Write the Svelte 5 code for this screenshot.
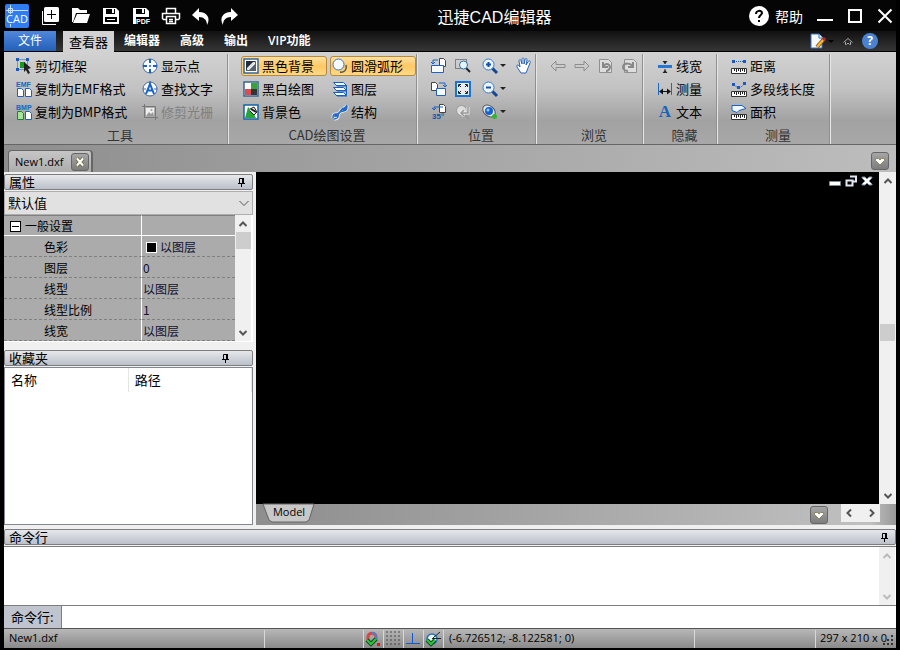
<script lang="ts">
  let activeTab = "查看器";
  let command = "";
  let preset = "默认值";

  const tabs = ["查看器", "编辑器", "高级", "输出", "VIP功能"];

  const page = (x: number, y: number, fill = "#fff", stroke = "#1c5fc4") =>
    `<path d="M${x} ${y}h4l2 2v6h-6z" fill="${fill}" stroke="${stroke}"/>`;
  const ruler = `<path d="M.5 10.5h15v5H.5z" fill="#fff" stroke="#333"/><path d="M3.500 11v2M5.500 11v3M7.500 11v2M9.500 11v3M11.500 11v2M13.500 11v3" stroke="#222"/>`;
  const lens = `<path d="M10 10l5 5" stroke="#17468f" stroke-width="3"/><circle cx="6.500" cy="6.500" r="5.500" fill="#eaf5ff" stroke="#3679cf"/>`;

  // inner markup of the 16x16 icons
  const icons: Record<string, string> = {
    cut: `<path d="M1.500 1.500h10v10h-10z" fill="none" stroke="#1c5fc4" stroke-dasharray="1 1"/><path d="M0 0h3v3H0zM10 0h3v3h-3zM0 10h3v3H0z" fill="#1659c7"/><path d="M4 4h5v6H4z" fill="#179a20"/><path d="M8 4l7 6-3 1 2 4-2 1-2-4-2 2z" fill="#222"/>`,
    emf: `<text x="0" y="6" font-family="Liberation Sans" font-size="7" font-weight="700" fill="#1565c8">EMF</text>${page(1.5, 7.5)}${page(9.5, 7.5)}`,
    bmp: `<text x="0" y="6" font-family="Liberation Sans" font-size="7" font-weight="700" fill="#1565c8">BMP</text>${page(1.5, 7.5, "#a5e59a", "#16842a")}${page(9.5, 7.5)}`,
    target: `<circle cx="8" cy="8" r="7" fill="#f8fbff" stroke="#44689f"/><path d="M8 1v4M8 11v4M1 8h4M11 8h4" stroke="#1761c9" stroke-width="2"/><path d="M7 8h2M8 7v2" stroke="#1761c9"/>`,
    find: `<circle cx="8" cy="8" r="7" fill="#f8fbff" stroke="#44689f"/><path d="M1 8h3M12 8h3M8 0v3" stroke="#44689f"/><path d="M4 13L8 3l4 10M5.500 9.500h5" stroke="#1761c9" stroke-width="2" fill="none"/>`,
    crop: `<path d="M2.500 0v13.500H16M0 2.500h13.500V16" stroke="#777" fill="none"/><path d="M4 4h8v8H4z" fill="#eee"/><path d="M4 12l3-4 2 2 2-2 1 4z" fill="#999"/><circle cx="9.500" cy="6" r="1" fill="#999"/>`,
    dark: `<path d="M1 1h14v14H1z" fill="#fff" stroke="#376694" stroke-width="1.500"/><path d="M3 3h10L3 13z" fill="#262d3a"/><path d="M13 3v10H3z" fill="#56606e"/><path d="M12 4v2l-6 6H4z" fill="#fff"/><path d="M12 4L4 12V10l6-6z" fill="#e4edf6"/>`,
    mono: `<path d="M1 1h14v14H1z" fill="#fff" stroke="#376694" stroke-width="1.500"/><path d="M8 2h6v6H8z" fill="#38a33d"/><path d="M2 8h6v6H2z" fill="#e14b4b"/><path d="M8 8h6v6H8z" fill="#333"/><path d="M2 2h6v6H2z" fill="#fff"/>`,
    bgcolor: `<path d="M1 1h14v14H1z" fill="#fff" stroke="#1463a8" stroke-width="1.500"/><path d="M2 14L5 3l4 4 4 7z" fill="#27a638"/><path d="M7 5l4-2 3 5-3 3-4-4" fill="#eef" stroke="#222"/><path d="M8 5l5 3" stroke="#222" stroke-width="2"/>`,
    smooth: `<circle cx="6.500" cy="6.500" r="5.500" fill="#f5fbff" stroke="#3077d1"/><path d="M8 14c5 1 7-3 6-7" fill="none" stroke="#555" stroke-width="1.500"/>`,
    layers: `<path d="M1.500 1.500h10l3 3h-10zM1.500 6.500h10l3 3h-10zM1.500 11.500h10l3 3h-10z" fill="#f4faff" stroke="#1760c3"/><path d="M2 2l3 3h10M2 7l3 3h10M2 12l3 3h10M14.500 4v10" fill="none" stroke="#1760c3"/>`,
    structure: `<path d="M1 14c0-8 5-1 7-6s5-2 7-7M2 15c7 0 2-5 6-7s7 0 7-6" fill="none" stroke="#eef5ff" stroke-width="3"/><path d="M1 14c0-8 5-1 7-6s5-2 7-7M2 15c7 0 2-5 6-7s7 0 7-6M3 10l3 3M10 4l3 3M2 12h4M10 5h4" fill="none" stroke="#2367c4" stroke-width="1.500"/>`,
    pageLeft: `${page(8.5, 0.5, "#fff", "#444")}<path d="M.5 7.500h12v7H.5z" fill="#f5faff" stroke="#1c62c8"/><path d="M7 2H2v4M0 4l2 2 2-2" fill="none" stroke="#1c62c8"/>`,
    pageRight: `${page(0.5, 1.5, "#fff", "#444")}<path d="M5.500 7.500h9v7h-9z" fill="#f5faff" stroke="#1c62c8"/><path d="M8 2h6v3M12 4l2 2 2-2" fill="none" stroke="#1c62c8"/>`,
    angle: `${page(8.5, 0.5, "#fff", "#444")}<path d="M12 3H3v3M1 4l2 2 2-2" fill="none" stroke="#1c62c8"/><text x="1" y="15" font-family="Liberation Sans" font-size="8" font-weight="700" fill="#1552aa">35°</text>`,
    zoomWindow: `<path d="M.5 1.500h11v9H.5z" fill="none" stroke="#333" stroke-dasharray="1 1"/><path d="M11 10l4 4" stroke="#222" stroke-width="2"/><circle cx="8.500" cy="7" r="4" fill="#e9f6ff" stroke="#2b6fbb"/>`,
    extents: `<path d="M1 1h14v14H1z" fill="#e9edf1" stroke="#1474df" stroke-width="2"/><path d="M3.500 6V3.500H6M10 3.500h2.500V6M12.500 10v2.500H10M6 12.500H3.500V10M4 4l2 2M12 4l-2 2M12 12l-2-2M4 12l2-2" stroke="#222" fill="none"/>`,
    zoomPrevious: `<path d="M9 10l5 5" stroke="#999" stroke-width="2"/><circle cx="6.500" cy="6.500" r="5" fill="#ddd" stroke="#999"/><path d="M13 3v6H7M9 6L6 9l3 3" fill="none" stroke="#eee" stroke-width="3"/><path d="M13 3v6H7M9 6L6 9l3 3" fill="none" stroke="#999" stroke-width="1.500"/>`,
    zoomIn: `${lens}<path d="M4 6.500h5M6.500 4v5" stroke="#1552aa" stroke-width="2"/>`,
    zoomOut: `${lens}<path d="M4 6.500h5" stroke="#1552aa" stroke-width="2"/>`,
    orbit: `<ellipse cx="7" cy="7" rx="7" ry="5" transform="rotate(40 7 7)" fill="#dce7ec" stroke="#555"/><circle cx="7" cy="7" r="4" fill="#1761cf"/><circle cx="6" cy="6" r="1.500" fill="#91d1ff"/><circle cx="12.500" cy="12.500" r="2.500" fill="#32b431"/>`,
    hand: `<path d="M5 15L1 9c-1-2 1-3 3 0L3 3c0-2 2-2 2 0l1 3V1.500c0-2 2-2 2 0V6l1-4c0-2 2-2 2 0l-1 5 2-3c1-2 3-1 2 1l-2 5-2 5z" fill="#fff" stroke="#2863bd"/>`,
    back: `<path d="M6 3L1 8l5 5v-3.500h9v-3H6z" fill="#ccc" stroke="#8d8d8d"/>`,
    forward: `<path d="M10 3l5 5-5 5V9.500H1v-3h9z" fill="#ccc" stroke="#8d8d8d"/>`,
    rotateLeft: `<path d="M1.500 1.500h9l3 3v10h-12z" fill="#ddd" stroke="#909090"/><path d="M5 4v5h5M5 9c2-4 6-4 7 0 0 2-2 4-4 4" fill="none" stroke="#888" stroke-width="2"/>`,
    rotateRight: `<path d="M2.500 1.500h9l3 3v10h-12z" fill="#ddd" stroke="#909090"/><path d="M11 4v5H6M11 9c-2-4-9-5-10 0 0 2 2 4 5 4" fill="none" stroke="#888" stroke-width="2"/>`,
    lineWidth: `<path d="M1 7h14v3H1z" fill="#2477d5"/><path d="M8 3v3M8 11v4" stroke="#222"/><path d="M5.500 3h5L8 6zM5.500 15h5L8 12z" fill="#222"/>`,
    dimension: `<path d="M1.500 2v12M14.500 2v12" stroke="#1b68cc"/><path d="M3 10.500h10" stroke="#111"/><path d="M2 10.500l4-3v6zM14 10.500l-4-3v6z" fill="#111"/>`,
    distance: `<path d="M3 3.500h10" stroke="#1659c7" stroke-dasharray="1 1"/><path d="M1 2h3v3H1zM12 2h3v3h-3z" fill="#1659c7"/>${ruler}`,
    polyline: `<path d="M2 3.500l6 4 6-5" stroke="#1659c7" stroke-dasharray="1 1" fill="none"/><path d="M1 2h3v3H1zM6 5h3v3H6zM12 1h3v3h-3z" fill="#1659c7"/>${ruler}`,
    area: `<path d="M1 1.500h10l4 3-7 2-2 2-5-2z" fill="#eef7ff" stroke="#1761c9"/>${ruler}`,
    snap: `<path d="M3 11V6c0-5 8-5 8 0v4" fill="none" stroke="#d44" stroke-width="3"/><path d="M7 2c3 0 4 2 4 4v4" fill="none" stroke="#4b82c8" stroke-width="2"/><path d="M2 9l4 4 5-5" fill="none" stroke="#064d11" stroke-width="4"/><path d="M2 9l4 4 5-5" fill="none" stroke="#33c343" stroke-width="2"/><path d="M12 12h3v3h-3z" fill="#e11"/>`,
    dots: `<path d="M1 1h2M5 1h2M9 1h2M13 1h2M1 5h2M5 5h2M9 5h2M13 5h2M1 9h2M5 9h2M9 9h2M13 9h2M1 13h2M5 13h2M9 13h2M13 13h2" stroke="#444"/>`,
    ortho: `<path d="M1 12.500h14M7.500 2v10" stroke="#1659c7"/>`,
    track: `<circle cx="7" cy="8" r="5" fill="#e8f5ff" stroke="#2871bd" stroke-width="1.500"/><path d="M7 7.500h9M8 7l7-6" stroke="#222"/><path d="M2 9l4 4 4-4" fill="none" stroke="#064d11" stroke-width="4"/><path d="M2 9l4 4 4-4" fill="none" stroke="#33c343" stroke-width="2"/>`,
    pin: `<path d="M6.500 4.500h4v5h-4zM5 9.500h7M8.500 10v3" fill="none" stroke="#000"/><path d="M9 4h2v6H9z"/>`,
    up: `<path d="M4.500 10L8 6.500 11.500 10" fill="none" stroke="currentColor" stroke-width="2"/>`,
    down: `<path d="M4.500 6L8 9.500 11.500 6" fill="none" stroke="currentColor" stroke-width="2"/>`,
    drop: `<path d="M3.500 6L8 10.500 12.500 6" fill="none" stroke="currentColor"/>`,
    left: `<path d="M10 4.500L6.500 8l3.500 3.500" fill="none" stroke="currentColor" stroke-width="2"/>`,
    right: `<path d="M6 4.500L9.500 8 6 11.500" fill="none" stroke="currentColor" stroke-width="2"/>`,
    heart: `<path d="M3.500 5.500h3L8 7l1.500-1.500h3v2L8 12 3.500 7.500z" fill="#fff" stroke="#8d8560"/>`,
    close: `<path d="M5 4.500l6 7M11 4.500l-6 7" stroke="#777040" stroke-width="4"/><path d="M5 4.500l6 7M11 4.500l-6 7" stroke="#fff" stroke-width="2"/>`,
    note: `<path d="M1 1h8l3 3v11H1z" fill="#f4f8ff" stroke="#3771c4"/><path d="M9 1v4h4" fill="#fff" stroke="#3771c4"/><path d="M7 14l7-8" stroke="#8c5a18" stroke-width="4"/><path d="M7 14l7-8" stroke="#f6bc3d" stroke-width="2"/><path d="M13 7l2-2" stroke="#b52b39" stroke-width="3"/>`,
    collapse: `<path d="M3.500 9.500L8 5.500l4.500 4M5.500 9v2.500h1L8 10l1.500 1.500h1V9" fill="none" stroke="#aaa"/>`,
  };

  // 18x18 icons of the quick access bar
  const quick = [
    { label: "新建", art: `<path d="M.5 4v13.500H14" fill="none" stroke="#fff"/><rect x="2" y="0" width="15" height="15" rx="1.500" fill="#fff"/><path d="M9.500 3v9M5 7.500h9" stroke="#000"/>` },
    { label: "打开", art: `<path d="M0 1h6l2 2h7v3H4L1 15H0z" fill="#fff"/><path d="M5 7h13l-3 9H1z" fill="#fff"/>` },
    { label: "保存", art: `<path d="M1 1h13l3 3v13H1z" fill="#fff"/><path d="M4 2h9v5H4zM3 10h12v5H3z" fill="#000"/><path d="M10 2h2v4h-2zM5 12h8v1H5z" fill="#fff"/>` },
    { label: "导出PDF", art: `<path d="M1 1h13l3 3v13H1z" fill="#fff"/><path d="M4 2h9v5H4zM4 10h14v8H4z" fill="#000"/><path d="M10 2h2v4h-2z" fill="#fff"/><text x="4" y="17" font-family="Liberation Sans" font-size="7" font-weight="700" fill="#fff">PDF</text>` },
    { label: "打印", art: `<path d="M4.500 6V1.500h9V6M4.500 12.500h-3l-1-1v-5h17v5l-1 1h-3M4.500 9.500h9v7h-9zM7 12.500h4M7 14.500h4" fill="none" stroke="#fff" stroke-width="1.500"/>` },
    { label: "撤销", art: `<path d="M7 1v4c8 0 12 6 8 13 0-5-3-8-8-8v4L0 8z" fill="#fff"/>` },
    { label: "重做", art: `<path d="M9 1v4C1 5-3 11 1 18c0-5 3-8 8-8v4l7-6z" fill="#fff"/>` },
  ];

  const tools = [
    { icon: "cut", label: "剪切框架" },
    { icon: "target", label: "显示点" },
    { icon: "emf", label: "复制为EMF格式" },
    { icon: "find", label: "查找文字" },
    { icon: "bmp", label: "复制为BMP格式" },
    { icon: "crop", label: "修剪光栅", disabled: true },
  ];

  const drawing = [
    { icon: "dark", label: "黑色背景", on: true },
    { icon: "smooth", label: "圆滑弧形", on: true },
    { icon: "mono", label: "黑白绘图" },
    { icon: "layers", label: "图层" },
    { icon: "bgcolor", label: "背景色" },
    { icon: "structure", label: "结构" },
  ];

  const position = [
    { icon: "pageLeft" }, { icon: "zoomWindow" }, { icon: "zoomIn", menu: true }, { icon: "hand" },
    { icon: "pageRight" }, { icon: "extents" }, { icon: "zoomOut", menu: true }, null,
    { icon: "angle" }, { icon: "zoomPrevious" }, { icon: "orbit", menu: true }, null,
  ];

  const browse = ["back", "forward", "rotateLeft", "rotateRight"];

  const hide = [
    { icon: "lineWidth", label: "线宽" },
    { icon: "dimension", label: "测量" },
    { letter: "A", label: "文本" },
  ];

  const measure = [
    { icon: "distance", label: "距离" },
    { icon: "polyline", label: "多段线长度" },
    { icon: "area", label: "面积" },
  ];

  const props = [
    { name: "色彩", value: "以图层", swatch: true },
    { name: "图层", value: "0" },
    { name: "线型", value: "以图层" },
    { name: "线型比例", value: "1" },
    { name: "线宽", value: "以图层" },
  ];
</script>

{#snippet icon(name: string)}
  <svg class="icon" viewBox="0 0 16 16" width="16" height="16" aria-hidden="true">{@html icons[name]}</svg>
{/snippet}

{#snippet command_button(item: any)}
  <button class="cmd" class:on={item.on} disabled={item.disabled}>
    {#if item.letter}<b class="letter">{item.letter}</b>{:else}{@render icon(item.icon)}{/if}{item.label}
  </button>
{/snippet}

<div class="app">
  <header class="titlebar">
    <div class="quick">
      <svg class="logo" viewBox="0 0 24 24" width="24" height="24">
        <rect width="24" height="24" rx="2" fill="#2f7df0" />
        <path d="M5.500 1v22M1 6.500h22M3.500 4.500h4v4h-4z" fill="none" stroke="#c9e0ff" />
        <path d="M1 10h22v10H1z" fill="#2f7df0" />
        <text x="12" y="19" text-anchor="middle" font-family="Open Sans" font-size="11" fill="#fff">CAD</text>
      </svg>
      {#each quick as q}
        <button aria-label={q.label}><svg viewBox="0 0 18 18" width="18" height="18">{@html q.art}</svg></button>
      {/each}
    </div>
    <h1>迅捷CAD编辑器</h1>
    <div class="window">
      <button class="help">
        <svg viewBox="0 0 20 20" width="20" height="20">
          <circle cx="10" cy="10" r="10" fill="#fff" />
          <path d="M7 8c0-4 6-4 6-1 0 2-3 2-3 5M10 14v2" fill="none" stroke="#000" stroke-width="2" />
        </svg>
        帮助
      </button>
      <button aria-label="最小化"><svg viewBox="0 0 16 16" width="16" height="16"><path d="M0 12h16" stroke="#fff" stroke-width="2" /></svg></button>
      <button aria-label="最大化"><svg viewBox="0 0 16 16" width="16" height="16"><path d="M2 2h12v12H2z" fill="none" stroke="#fff" stroke-width="2" /></svg></button>
      <button aria-label="关闭"><svg viewBox="0 0 16 16" width="16" height="16"><path d="M1.500 1.500l13 13M14.500 1.500l-13 13" stroke="#fff" stroke-width="2" /></svg></button>
    </div>
  </header>

  <nav class="tabs">
    <button class="file">文件</button>
    {#each tabs as tab}
      <button class:active={activeTab === tab} on:click={() => (activeTab = tab)}>{tab}</button>
    {/each}
    <div class="tabs-right">
      <button class="style-menu" aria-label="样式">{@render icon("note")}<i class="caret"></i></button>
      <button aria-label="收起">{@render icon("collapse")}</button>
      <button class="round" aria-label="帮助">?</button>
    </div>
  </nav>

  <section class="ribbon">
    <div class="group tools">
      <div class="items">{#each tools as t}{@render command_button(t)}{/each}</div>
      <h2>工具</h2>
    </div>
    <div class="group drawing">
      <div class="items">{#each drawing as d}{@render command_button(d)}{/each}</div>
      <h2>CAD绘图设置</h2>
    </div>
    <div class="group position">
      <div class="items">
        {#each position as p}
          {#if p}
            <button class="cmd" aria-label={p.icon}>
              {@render icon(p.icon)}{#if p.menu}<i class="caret"></i>{/if}
            </button>
          {:else}
            <span></span>
          {/if}
        {/each}
      </div>
      <h2>位置</h2>
    </div>
    <div class="group browse">
      <div class="items">
        {#each browse as b}<button class="cmd" aria-label={b} disabled>{@render icon(b)}</button>{/each}
      </div>
      <h2>浏览</h2>
    </div>
    <div class="group hide">
      <div class="items">{#each hide as h}{@render command_button(h)}{/each}</div>
      <h2>隐藏</h2>
    </div>
    <div class="group measure">
      <div class="items">{#each measure as m}{@render command_button(m)}{/each}</div>
      <h2>测量</h2>
    </div>
  </section>

  <div class="doctabs">
    <div class="doctab">
      <span>New1.dxf</span>
      <button class="chip" aria-label="关闭文件">{@render icon("close")}</button>
    </div>
    <button class="chip" aria-label="文件列表">{@render icon("heart")}</button>
  </div>

  <main>
    <aside>
      <div class="panel-head"><h3>属性</h3><button aria-label="固定">{@render icon("pin")}</button></div>
      <div class="combo">
        <select bind:value={preset} aria-label="预设"><option>默认值</option></select>
        {@render icon("drop")}
      </div>
      <div class="propgrid">
        <table>
          <thead>
            <tr><th><span class="minus"></span>一般设置</th><td></td></tr>
          </thead>
          <tbody>
            {#each props as p}
              <tr>
                <th>{p.name}</th>
                <td class:wide={p.swatch}>{#if p.swatch}<i class="swatch"></i>{/if}{p.value}</td>
              </tr>
            {/each}
          </tbody>
        </table>
        <div class="scroll">
          <button aria-label="上">{@render icon("up")}</button>
          <i class="thumb"></i>
          <button class="end" aria-label="下">{@render icon("down")}</button>
        </div>
      </div>
      <div class="panel-head fav"><h3>收藏夹</h3><button aria-label="固定">{@render icon("pin")}</button></div>
      <div class="favorites">
        <table>
          <thead><tr><th>名称</th><th>路径</th></tr></thead>
        </table>
      </div>
    </aside>

    <section class="view">
      <div class="canvas">
        <button aria-label="最小化"><svg viewBox="0 0 12 12" width="12" height="12"><path d="M.5 6.500h11v4H.5z" fill="#fff" stroke="#789" /></svg></button>
        <button aria-label="还原"><svg viewBox="0 0 12 12" width="12" height="12"><path d="M5 1.500h6v5H8M1.500 5.500h6v5h-6z" fill="none" stroke="#dfe8f2" stroke-width="2" /></svg></button>
        <button aria-label="关闭"><svg viewBox="0 0 12 12" width="12" height="12"><path d="M1 2h3l2 2 2-2h3v1L8 6l3 3v1H8L6 8l-2 2H1V9l3-3-3-3z" fill="#fff" stroke="#789" /></svg></button>
      </div>
      <div class="scroll">
        <button aria-label="上">{@render icon("up")}</button>
        <i class="thumb low"></i>
        <button class="end" aria-label="下">{@render icon("down")}</button>
      </div>
      <div class="sheets">
        <button class="model">
          <svg viewBox="0 0 52 19" width="52" height="19" aria-hidden="true"><path d="M0 0l6 16 3 2h34l3-2 5-16z" fill="#c8c8c8" stroke="#666" /></svg>
          <span>Model</span>
        </button>
        <button class="chip" aria-label="布局列表">{@render icon("heart")}</button>
        <div class="hscroll">
          <button aria-label="左">{@render icon("left")}</button>
          <button aria-label="右">{@render icon("right")}</button>
        </div>
      </div>
    </section>
  </main>

  <section class="console">
    <div class="panel-head"><h3>命令行</h3><button aria-label="固定">{@render icon("pin")}</button></div>
    <div class="log">
      <textarea readonly aria-label="命令记录"></textarea>
      <div class="scroll faded">
        <button aria-label="上">{@render icon("up")}</button>
        <button class="end" aria-label="下">{@render icon("down")}</button>
      </div>
    </div>
    <div class="prompt">
      <label for="command">命令行:</label>
      <input id="command" type="text" bind:value={command} />
    </div>
  </section>

  <footer>
    <span class="name">New1.dxf</span>
    <span class="blank"></span>
    <button aria-label="捕捉">{@render icon("snap")}</button>
    <button aria-label="栅格">{@render icon("dots")}</button>
    <button aria-label="正交">{@render icon("ortho")}</button>
    <button aria-label="对象捕捉">{@render icon("track")}</button>
    <span class="coords">(-6.726512; -8.122581; 0)</span>
    <span class="blank2"></span>
    <span class="size">297 x 210 x 0</span>
    <svg class="grip" viewBox="0 0 12 12" width="12" height="12"><path d="M9 0h2v2H9zM5 4h2v2H5zM9 4h2v2H9zM1 8h2v2H1zM5 8h2v2H5zM9 8h2v2H9z" fill="#333" /></svg>
  </footer>
</div>

<style>
  :global(body) {
    margin: 0;
    background: #000;
  }

  .app {
    display: flex;
    flex-direction: column;
    height: 100vh;
    box-sizing: border-box;
    padding: 0 4px 2px;
    background: #000;
    color: #000;
    font: 13px/16px "Noto Sans CJK SC", sans-serif;
    overflow: hidden;
  }

  button {
    display: flex;
    align-items: center;
    padding: 0;
    border: 0;
    background: none;
    color: inherit;
    font: inherit;
    white-space: nowrap;
  }

  svg {
    display: block;
    flex: none;
    overflow: visible;
  }

  h1,
  h2,
  h3 {
    margin: 0;
    font-weight: 400;
  }

  .titlebar {
    display: flex;
    flex: none;
    align-items: center;
    justify-content: space-between;
    height: 31px;
    color: #fff;
    background: #050505;
  }

  .quick {
    display: flex;
    align-items: center;
    gap: 12px;
  }

  .logo {
    margin: 0 1px;
  }

  .titlebar h1 {
    font: 16px/24px "Liberation Sans", "Noto Sans CJK SC", sans-serif;
    padding-top: 4px;
  }

  .window {
    display: flex;
    align-items: center;
    gap: 14px;
    padding-right: 3px;
  }

  .help {
    gap: 6px;
    font-size: 14px;
  }

  .tabs {
    display: flex;
    flex: none;
    height: 20px;
    color: #fff;
    background: linear-gradient(#111, #363636);
    border-bottom: 1px solid #000;
  }

  .tabs > button {
    padding: 0 10px;
    font: 600 12px/16px "Open Sans", "Noto Sans CJK SC", sans-serif;
  }

  .tabs > .file {
    margin-right: 7px;
    padding: 0 14px;
    font-weight: 400;
    background: linear-gradient(#4f87dc, #2360b8);
  }

  .tabs > .active {
    height: 21px;
    padding: 0 6px;
    color: #000;
    font-size: 13px;
    font-weight: 400;
    background: #d2d2d2;
  }

  .tabs-right {
    display: flex;
    align-items: center;
    gap: 6px;
    margin-left: auto;
    padding-right: 18px;
  }

  .style-menu .caret {
    border-top-color: #000;
  }

  .round {
    justify-content: center;
    width: 16px;
    height: 16px;
    border-radius: 50%;
    color: #fff;
    font: bold 12px/16px "Open Sans", sans-serif;
    background: #4a82d0;
  }

  .caret {
    margin-left: 2px;
    border: 3px solid transparent;
    border-top-color: #222;
    border-bottom: 0;
  }

  .ribbon {
    display: grid;
    grid-template-columns: 225px 189px 119px 107px 74px 113px 1fr;
    flex: none;
    height: 92px;
    background: linear-gradient(#d2d2d2, #c2c2c2 40%, #a2a2a2 75%, #a8a8a8);
    border-bottom: 1px solid #666;
  }

  .group {
    display: flex;
    flex-direction: column;
    margin-top: 2px;
    border-right: 1px solid #e6e6e6;
    box-shadow: inset -1px 0 #909090;
  }

  .items {
    display: grid;
    grid-auto-rows: 23px;
    align-items: center;
    padding-left: 12px;
    justify-content: start;
  }

  .group h2 {
    padding: 4px 0 0 8px;
    color: #333;
    font-size: 13px;
    line-height: 16px;
    text-align: center;
  }

  .cmd {
    gap: 3px;
    height: 20px;
  }

  .cmd:disabled {
    color: #808080;
  }

  .letter {
    width: 16px;
    color: #1764bd;
    font: bold 17px/20px "Liberation Serif", serif;
    text-align: center;
  }

  .tools .items {
    grid-template-columns: 126px 80px;
  }

  .drawing .items {
    grid-template-columns: 86px 86px;
    column-gap: 3px;
  }

  .drawing .cmd {
    box-sizing: border-box;
    width: 86px;
    padding: 0 1px;
    border: 1px solid transparent;
    border-radius: 3px;
  }

  .drawing .on {
    border-color: #b98a3c;
    background: linear-gradient(#ffe0a0, #ffc865 50%, #ffd985);
  }

  .position .items {
    grid-template-columns: 24px 27px 34px 16px;
    padding-left: 13px;
  }

  .position .cmd {
    gap: 0;
  }

  .browse .items {
    grid-template-columns: repeat(4, 24px);
    grid-template-rows: repeat(3, 23px);
    padding-left: 13px;
  }

  .hide .items,
  .measure .items {
    padding-left: 13px;
  }

  .doctabs {
    display: flex;
    flex: none;
    justify-content: space-between;
    align-items: end;
    height: 27px;
    padding: 0 7px 0 4px;
    background: linear-gradient(90deg, #8e8e8e, #bdbdbd);
    box-sizing: border-box;
  }

  .doctab {
    display: flex;
    align-items: center;
    gap: 8px;
    height: 21px;
    padding: 0 2px 0 6px;
    border: solid #666;
    border-width: 1px 2px 0 1px;
    border-radius: 4px 4px 0 0;
    background: linear-gradient(#c6c6c6, #adadad);
    font: 11px/16px "Open Sans", sans-serif;
  }

  .chip {
    box-sizing: border-box;
    justify-content: center;
    width: 18px;
    height: 18px;
    border: 1px solid #666;
    border-radius: 3px;
    background: linear-gradient(#a6a6a6, #7d7d7d);
  }

  .doctabs > .chip {
    margin-bottom: 2px;
  }

  main {
    display: grid;
    grid-template-columns: 249px minmax(0, 1fr);
    column-gap: 3px;
    flex: 1;
    min-height: 0;
    padding-bottom: 4px;
    background: #f0f0f0;
  }

  aside {
    display: flex;
    flex-direction: column;
    min-height: 0;
    padding-top: 2px;
  }

  .panel-head {
    display: flex;
    flex: none;
    align-items: center;
    justify-content: space-between;
    box-sizing: border-box;
    height: 16px;
    padding: 0 3px 0 4px;
    border: 1px solid #7e7e7e;
    border-radius: 2px;
    background: linear-gradient(#e6e8eb, #bbc0ca);
  }

  .panel-head h3 {
    font-size: 13px;
    line-height: 14px;
  }

  .fav {
    margin-top: 8px;
    padding-right: 19px;
  }

  .combo {
    display: grid;
    align-items: center;
    margin-top: 1px;
    height: 24px;
    box-sizing: border-box;
    border: 1px solid #adadad;
    background: #e1e1e1;
    color: #555;
  }

  .combo > :global(*) {
    grid-area: 1 / 1;
  }

  .combo select {
    appearance: none;
    width: 100%;
    height: 22px;
    padding: 0 3px;
    border: 0;
    border-radius: 0;
    background: none;
    color: #000;
    font: inherit;
  }

  .combo .icon {
    justify-self: end;
  }

  .propgrid {
    display: flex;
    flex: none;
    padding: 0 2px 1px 0;
    background: #fff;
  }

  .propgrid table {
    flex: 1;
    border-collapse: separate;
    border-spacing: 0;
    table-layout: fixed;
    background: #ababab;
    font-size: 12px;
  }

  .propgrid th,
  .propgrid td {
    box-sizing: border-box;
    height: 21px;
    padding: 1px 0 0 40px;
    border-bottom: 1px dashed #808080;
    font-weight: 400;
    line-height: 16px;
    text-align: left;
  }

  .propgrid th {
    width: 138px;
    border-right: 1px solid #fff;
  }

  .propgrid td {
    padding-left: 1px;
    color: #101030;
  }

  .propgrid td.wide {
    padding-left: 4px;
  }

  .propgrid thead th,
  .propgrid thead td {
    border-top: 1px solid #808080;
    border-bottom: 1px solid #fff;
  }

  .propgrid thead th {
    padding-left: 6px;
  }

  .minus {
    display: inline-block;
    box-sizing: border-box;
    width: 11px;
    height: 11px;
    margin-right: 4px;
    border: 1px solid #000;
    background: linear-gradient(#000, #000) center / 7px 1px no-repeat #fff;
    vertical-align: -1px;
  }

  .swatch {
    display: inline-block;
    width: 9px;
    height: 9px;
    margin-right: 3px;
    border: 1px solid #fff;
    background: #000;
    vertical-align: -1px;
  }

  .scroll {
    display: flex;
    flex-direction: column;
    align-items: center;
    width: 16px;
    background: #f0f0f0;
    color: #555;
  }

  .scroll button {
    height: 17px;
  }

  .scroll .end {
    margin-top: auto;
  }

  .thumb {
    width: 15px;
    height: 17px;
    background: #cdcdcd;
  }

  .thumb.low {
    margin-top: auto;
  }

  .thumb.low + .end {
    margin-top: 146px;
  }

  .faded {
    color: #bbb;
  }

  .favorites {
    flex: 1;
    min-height: 0;
    margin-top: 1px;
    border: 1px solid #828790;
    background: #fff;
  }

  .favorites table {
    width: 100%;
    border-collapse: collapse;
    table-layout: fixed;
  }

  .favorites th {
    height: 24px;
    padding: 0 6px;
    border-right: 1px solid #e5e5e5;
    font-weight: 400;
    text-align: left;
  }

  .view {
    display: grid;
    grid-template: minmax(0, 1fr) 21px / minmax(0, 1fr) 17px;
  }

  .canvas {
    display: flex;
    justify-content: flex-end;
    align-items: flex-start;
    gap: 4px;
    padding: 3px 6px;
    background: #000;
  }

  .view .scroll {
    width: 17px;
  }

  .sheets {
    grid-column: 1 / 3;
    display: flex;
    align-items: center;
    padding: 0 16px 0 7px;
    background: linear-gradient(90deg, #8e8e8e, #c0c0c0 96%, #999);
  }

  .model {
    display: grid;
    align-self: flex-start;
    align-items: start;
    justify-items: center;
    margin-right: auto;
    font: 11px/16px "Open Sans", sans-serif;
  }

  .model > * {
    grid-area: 1 / 1;
  }

  .hscroll {
    display: flex;
    align-items: center;
    justify-content: space-between;
    align-self: flex-start;
    width: 39px;
    height: 18px;
    margin-left: 13px;
    background: #f0f0f0;
    color: #555;
  }

  .console {
    flex: none;
    background: #f0f0f0;
  }

  .log {
    display: flex;
    height: 58px;
    margin-top: 1px;
    padding-right: 1px;
    border: 1px solid #7e7e7e;
    border-width: 1px 0;
    background: #fff;
  }

  .log textarea {
    flex: 1;
    padding: 2px;
    border: 0;
    resize: none;
    font: inherit;
    outline: none;
  }

  .prompt {
    display: flex;
    height: 22px;
    background: #c0c4ce;
    border-bottom: 1px solid #555;
  }

  .prompt label {
    width: 50px;
    padding: 3px 0 0 7px;
  }

  .prompt input {
    flex: 1;
    min-width: 0;
    padding: 0 4px;
    border: 0;
    border-left: 1px solid #7e7e7e;
    font: inherit;
    outline: none;
  }

  footer {
    position: relative;
    display: flex;
    flex: none;
    align-items: center;
    height: 19px;
    background: linear-gradient(#b8b8b8, #8a8a8a);
    font: 11px/16px "Open Sans", sans-serif;
  }

  footer > span,
  footer > button {
    box-sizing: border-box;
    height: 18px;
    padding-left: 5px;
    border-right: 1px solid #d8d8d8;
    white-space: nowrap;
  }

  footer > button {
    width: 20px;
    padding-left: 1px;
  }

  .name {
    flex: 0 0 261px;
  }

  .blank {
    flex: 0 0 99px;
  }

  .coords {
    flex: 0 0 251px;
  }

  .blank2 {
    flex: 1;
  }

  footer > .size {
    flex: 0 0 80px;
    padding-left: 4px;
    border-right: 0;
  }

  .grip {
    position: absolute;
    right: 2px;
    bottom: 1px;
  }
</style>
